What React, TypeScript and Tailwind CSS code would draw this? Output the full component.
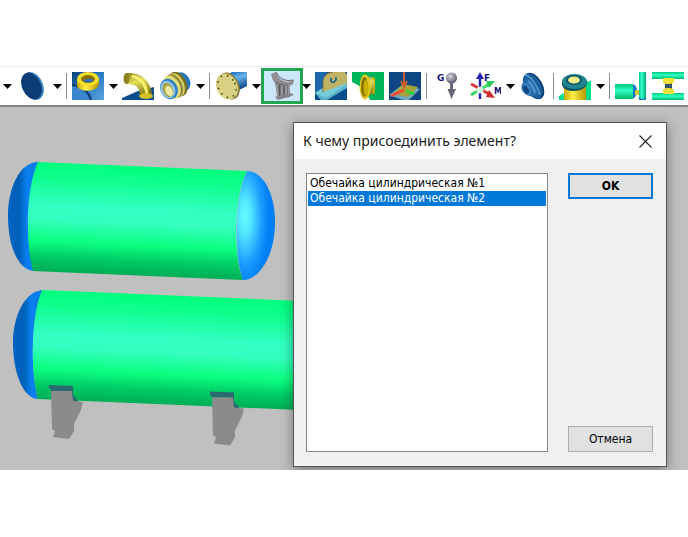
import type { ReactNode } from "react";
import { useState } from "react";
import clsx from "clsx";

const shells = ["Обечайка цилиндрическая №1", "Обечайка цилиндрическая №2"];

function Separator() {
  return <span className="h-[26px] w-[2px] shrink-0 border-l border-[#8c8c8c]" />;
}

function Arrow({ label }: { label: string }) {
  return (
    <button type="button" aria-label={label} className="h-8 w-[9px] shrink-0">
      <svg viewBox="0 0 9 5" className="h-[5px] w-[9px]">
        <path d="M0 0h9L4.5 5z" fill="#000" />
      </svg>
    </button>
  );
}

type ToolProps = {
  label: string;
  active?: boolean;
  narrow?: boolean;
  children: ReactNode;
};

function Tool({ label, active, narrow, children }: ToolProps) {
  return (
    <button
      type="button"
      aria-label={label}
      className={clsx(
        "flex shrink-0 items-center",
        active
          ? "-mr-[5px] -ml-1 h-9 w-[42px] justify-center border-3 border-[#22a652] bg-[#cce6fa]"
          : "h-8",
        !active && (narrow ? "w-[30px]" : "w-[33px]"),
      )}
    >
      <svg viewBox="0 0 32 28" className="h-7 w-8 shrink-0">
        {children}
      </svg>
    </button>
  );
}

function Gradients() {
  return (
    <svg className="absolute h-0 w-0" aria-hidden="true">
      <defs>
        <linearGradient id="sky" x1="0" y1="0" x2="0.3" y2="1">
          <stop offset="0" stopColor="#0d5ca8" />
          <stop offset="0.4" stopColor="#6bb5f0" />
          <stop offset="1" stopColor="#0b4684" />
        </linearGradient>
        <linearGradient id="plate" x1="0" y1="0" x2="1" y2="1">
          <stop offset="0" stopColor="#0b4078" />
          <stop offset="0.5" stopColor="#2f7cc4" />
          <stop offset="1" stopColor="#5aa2e0" />
        </linearGradient>
        <linearGradient id="yellow" x1="0" y1="0" x2="1" y2="0">
          <stop offset="0" stopColor="#c9a800" />
          <stop offset="0.4" stopColor="#fff04a" />
          <stop offset="1" stopColor="#b89400" />
        </linearGradient>
        <linearGradient id="olive" x1="0" y1="0" x2="0.4" y2="1">
          <stop offset="0" stopColor="#8a8420" />
          <stop offset="0.45" stopColor="#e6e05a" />
          <stop offset="1" stopColor="#7d7410" />
        </linearGradient>
        <linearGradient id="mint" x1="0" y1="0" x2="0" y2="1">
          <stop offset="0" stopColor="#00c878" />
          <stop offset="0.45" stopColor="#30ffc8" />
          <stop offset="1" stopColor="#00b868" />
        </linearGradient>
        <linearGradient id="mintSide" x1="0" y1="0" x2="1" y2="0">
          <stop offset="0" stopColor="#00c890" />
          <stop offset="0.4" stopColor="#38ffd0" />
          <stop offset="1" stopColor="#00a870" />
        </linearGradient>
        <radialGradient id="ball" cx="0.4" cy="0.35" r="0.65">
          <stop offset="0" stopColor="#d8d8e0" />
          <stop offset="1" stopColor="#5a5a6c" />
        </radialGradient>
      </defs>
    </svg>
  );
}

function Toolbar() {
  return (
    <div
      role="toolbar"
      aria-label="Элементы"
      className="flex h-[39px] items-center gap-1 overflow-hidden border-t border-[#ececec] bg-white pl-[3px]"
    >
      <Arrow label="Список обечаек" />
      <Tool label="Днище">
        <ellipse cx="17" cy="14" rx="10" ry="14.5" transform="rotate(-24 17 14)" fill="#3f86c4" />
        <ellipse cx="15.5" cy="14" rx="9.5" ry="14" transform="rotate(-24 15.5 14)" fill="#0b3c74" />
      </Tool>
      <Arrow label="Список днищ" />
      <Separator />
      <Tool label="Штуцер">
        <rect width="32" height="28" fill="url(#plate)" />
        <path d="M0 13Q16 16 19 28H0Z" fill="#3a86cc" />
        <path d="M0 13Q16 16 19 28" fill="none" stroke="#0a3868" strokeWidth="2" />
        <path d="M5 7v7c3 7 19 6 22-1V6z" fill="url(#yellow)" />
        <ellipse cx="16" cy="7" rx="11" ry="7" fill="#f6e02a" />
        <ellipse cx="16" cy="7" rx="7" ry="4" fill="#8a7400" />
        <path d="M11 9q5-4 11-1-5 5-11 1" fill="#2d73b4" />
      </Tool>
      <Arrow label="Список штуцеров" />
      <Tool label="Отвод">
        <path d="M0 28V26L16 19 32 15V28Z" fill="#0d4f8e" />
        <path d="M5 1C19 0 29 9 30 23q-4 5-12 1C18 16 15 12 4 12Z" fill="url(#olive)" />
        <ellipse cx="4.5" cy="6.5" rx="3" ry="5.5" fill="#8b8222" />
        <path d="M10 4q13 3 15 18" fill="none" stroke="#f8f06c" strokeWidth="3" />
        <ellipse cx="24" cy="24" rx="7" ry="3" fill="#cfc024" />
      </Tool>
      <Tool label="Компенсатор">
        <ellipse cx="23" cy="10" rx="8" ry="10" transform="rotate(-25 23 10)" fill="#2575b8" />
        <ellipse cx="19" cy="12" rx="8.5" ry="13" transform="rotate(-25 19 12)" fill="#77701e" />
        <ellipse cx="17" cy="13" rx="8" ry="12.5" transform="rotate(-25 17 13)" fill="#d9d06c" />
        <ellipse cx="15" cy="14" rx="8" ry="12.5" transform="rotate(-25 15 14)" fill="#8d852e" />
        <ellipse cx="13" cy="15" rx="8" ry="12" transform="rotate(-25 13 15)" fill="#e2da7c" />
        <ellipse cx="10" cy="17" rx="8.5" ry="10.5" transform="rotate(-25 10 17)" fill="#2b7dc0" />
        <ellipse cx="9" cy="17.5" rx="7" ry="9" transform="rotate(-25 9 17.5)" fill="#91c8ea" />
        <ellipse cx="9" cy="18" rx="5" ry="7.5" transform="rotate(-25 9 18)" fill="#aaa044" />
        <ellipse cx="10" cy="19" rx="3.5" ry="5.5" transform="rotate(-25 10 19)" fill="#eee9a4" />
      </Tool>
      <Arrow label="Список компенсаторов" />
      <Separator />
      <Tool label="Фланец">
        <path d="M12 3 17 0H32V14L22 19Z" fill="url(#sky)" />
        <ellipse cx="14" cy="14" rx="10" ry="14" transform="rotate(-25 14 14)" fill="#857d36" />
        <ellipse cx="12" cy="14.5" rx="10.5" ry="13.5" transform="rotate(-25 12 14.5)" fill="#d8d184" />
        <ellipse
          cx="12"
          cy="14.5"
          rx="8.5"
          ry="11.5"
          transform="rotate(-25 12 14.5)"
          fill="none"
          stroke="#4b4514"
          strokeWidth="1.7"
          strokeDasharray="1.5 5"
        />
      </Tool>
      <Arrow label="Список фланцев" />
      <Tool label="Седловая опора" active>
        <path d="M5 2 10 0C13 9 20 12 28 8l-1 4Q24 15 19 14L9 11Q6 8 5 2" fill="#8f8f93" />
        <path d="M9 10 23 13 24 25 12 27Z" fill="#77777b" />
        <path d="M11 12l1 14M16 14v11M20 14v10M23 13v11" stroke="#97979b" strokeWidth="2" />
        <path d="M13.500 13v13M18 14v11" stroke="#56565a" />
        <path d="M9 25 25 21 28 23 12 28Z" fill="#85858a" />
        <path d="M10 0q5 11 18 8" fill="none" stroke="#65656a" />
      </Tool>
      <Arrow label="Список опор" />
      <Tool label="Проушина">
        <rect width="32" height="28" fill="#0c4c8a" />
        <path d="M0 0H12L7 10V17L0 21Z" fill="#1b67ac" />
        <path d="M0 21 9 15 32 10V16L12 28H6Z" fill="#58b3c8" />
        <path d="M0 21 10 15 31 10V13L11 26Z" fill="#76cbd8" />
        <path d="M8 20V9Q9 1 18 0H30L32 3V11Z" fill="#c0b264" />
        <path d="M8 20V9Q9 1 18 0" fill="none" stroke="#81743a" />
        <path d="M16 6v3q2 3 5-1V5" fill="none" stroke="#176387" strokeWidth="1.7" />
      </Tool>
      <Tool label="Врезка">
        <path d="M0 0H32V28H18Q14 16 0 10Z" fill="#00b45a" />
        <path d="M13 4 23 6V21L13 25Z" fill="url(#olive)" />
        <path d="M20 6q5 6 0 16l3-1V6z" fill="#c9b300" />
        <ellipse cx="13" cy="15" rx="5.5" ry="12.5" fill="#e1ca24" />
        <ellipse cx="12.5" cy="15" rx="3.5" ry="10" fill="#857300" />
        <ellipse cx="14" cy="16" rx="2.5" ry="8" fill="#c6ad00" />
      </Tool>
      <Tool label="Опорная лапа">
        <rect width="32" height="28" fill="#0d4682" />
        <path d="M0 23 13 13 31 17 20 28H14Z" fill="#73a9ba" />
        <path d="M4 22 14 12 29 15 19 25Z" fill="#a9a238" />
        <path d="M2 24 15 18" stroke="#ef4939" strokeWidth="3" />
        <path d="M17 19 25 22" stroke="#29d43a" strokeWidth="2.5" />
        <path d="M15 0V13M12 9 15 15 18 9" fill="none" stroke="#c75e32" strokeWidth="2" />
      </Tool>
      <Separator />
      <Tool label="Масса">
        <text x="5" y="9" fill="#11117a" className="font-['DejaVu_Sans'] text-[9px] font-bold">
          G
        </text>
        <path d="M18 8h3v9h3l-4.500 10-4-10H18z" fill="#666676" />
        <circle cx="19.5" cy="6" r="5.5" fill="url(#ball)" />
      </Tool>
      <Tool label="Нагрузки">
        <path d="M11 27V3" stroke="#2424b8" strokeWidth="2.5" />
        <path d="M7 7 11 0 15 7Z" fill="#2424b8" />
        <path d="M2 12 22 23" stroke="#d83838" strokeWidth="3" />
        <path d="M20 18 26 26 17 25Z" fill="#d02b2b" />
        <path d="M2 23 22 11" stroke="#3bd663" strokeWidth="3" />
        <path d="M17 9 26 9 20 16Z" fill="#31c957" />
        <circle cx="11" cy="18" r="3.5" fill="#d2f5dc" />
        <text x="15" y="9" fill="#11117a" className="font-['DejaVu_Sans'] text-[9px] font-bold">
          F
        </text>
        <text x="25" y="22" fill="#11117a" className="font-['DejaVu_Sans'] text-[8px] font-bold">
          M
        </text>
      </Tool>
      <Arrow label="Список нагрузок" />
      <Tool label="Переход" narrow>
        <ellipse cx="15" cy="14" rx="8.500" ry="14.500" transform="rotate(-30 15 14)" fill="#0a3f74" />
        <ellipse cx="13.500" cy="14" rx="8" ry="13.500" transform="rotate(-30 13.500 14)" fill="#1b5f9c" />
        <path d="M6 3Q15 5 21 23" fill="none" stroke="#5b9dcc" strokeWidth="1.500" />
        <path d="M9 6 3 12Q1 17 5 21T13 24L19 23Q18 12 9 6Z" fill="#226cae" />
        <path d="M9 9Q14 13 16 21" fill="none" stroke="#4f94cc" strokeWidth="2.500" />
        <ellipse cx="7.500" cy="17" rx="4" ry="6.500" transform="rotate(-30 7.500 17)" fill="#3a84c0" />
        <ellipse cx="7" cy="17.500" rx="2.500" ry="4.500" transform="rotate(-30 7 17.500)" fill="#12477c" />
      </Tool>
      <Separator />
      <Tool label="Люк">
        <path d="M0 28V24Q5 20 12 20L24 10 32 9V28Z" fill="#00e08c" />
        <path d="M5 12H27V28H5Z" fill="url(#yellow)" />
        <path d="M3 10V13Q5 19 15 19T28 12V9Z" fill="#07545e" />
        <ellipse cx="15.5" cy="9.5" rx="12.500" ry="7.500" fill="#248391" />
        <ellipse cx="15" cy="8" rx="8" ry="5" fill="#0b5661" />
        <ellipse cx="15" cy="8" rx="6" ry="3.500" fill="#eded8c" />
      </Tool>
      <Arrow label="Список люков" />
      <Separator />
      <Tool label="Рубашка">
        <path d="M16 12Q22 12 22 19T16 27Z" fill="#1676c8" />
        <rect y="12" width="18" height="15" fill="url(#mint)" />
        <rect x="20" y="18" width="5" height="5" fill="#d6c63c" />
        <path d="M24 0H31V27Q27 30 24 27Z" fill="url(#mintSide)" />
        <path d="M24 26q3 4 7 0" fill="none" stroke="#1769bb" strokeWidth="1.5" />
      </Tool>
      <Tool label="Соединение">
        <rect width="32" height="7" fill="url(#mint)" />
        <rect y="21" width="32" height="7" fill="url(#mint)" />
        <path d="M13 6H20V21H13Z" fill="url(#yellow)" />
        <path d="M11 6H22V11H11ZM11 17H22V22H11Z" fill="#eee336" />
        <rect x="13" y="12" width="7" height="4" fill="#34546a" />
      </Tool>
    </div>
  );
}

function Model() {
  return (
    <svg viewBox="0 107 300 363" className="absolute top-0 left-0 h-[363px] w-[300px]">
      <defs>
        <linearGradient id="shell1" gradientUnits="userSpaceOnUse" x1="140" y1="167" x2="135" y2="275">
          <stop offset="0" stopColor="#00ff7c" />
          <stop offset="0.15" stopColor="#10ff90" />
          <stop offset="0.4" stopColor="#34ffc4" />
          <stop offset="0.52" stopColor="#34ffc0" />
          <stop offset="0.72" stopColor="#0cff80" />
          <stop offset="0.88" stopColor="#00c964" />
          <stop offset="1" stopColor="#00ae56" />
        </linearGradient>
        <linearGradient id="shell2" href="#shell1" gradientTransform="translate(3 128)" />
        <linearGradient id="dome" x1="0" y1="0" x2="1" y2="0">
          <stop offset="0" stopColor="#0064c4" />
          <stop offset="0.35" stopColor="#0060b8" />
          <stop offset="0.6" stopColor="#0a80f0" />
          <stop offset="1" stopColor="#0a78e0" />
        </linearGradient>
        <radialGradient id="cap" cx="0.22" cy="0.42" r="0.62">
          <stop offset="0" stopColor="#62ffff" />
          <stop offset="0.25" stopColor="#54e8ff" />
          <stop offset="0.7" stopColor="#1c9cff" />
          <stop offset="1" stopColor="#0080f4" />
        </radialGradient>
      </defs>

      <path d="M40 162C20 160 8 188 8 216C8 246 18 270 34 271C25 240 27 190 40 162Z" fill="url(#dome)" />
      <path d="M38 162 247 171C234 195 233 256 243 280L33 271C25 240 26 188 38 162Z" fill="url(#shell1)" />
      <path d="M247 171C262 171 275 192 275 222C275 256 259 280 243 280C234 256 234 196 247 171Z" fill="url(#cap)" />

      <path d="M44 290C25 290 13 316 13 343C13 374 24 399 38 399C30 368 31 318 44 290Z" fill="url(#dome)" />
      <path d="M42 290 300 301V410L38 399C30 368 31 316 42 290Z" fill="url(#shell2)" />

      <g id="saddle">
        <path d="M49 385 73 386V395L78 401V403H72L69 391H51V389H49Z" fill="#2b6870" />
        <path d="M51 391H72L73 401 83 402 81 410 74 424V431L69 439 53 437 55 431 52 429Z" fill="#8b8b8b" />
      </g>
      <use href="#saddle" transform="translate(161 6.5)" />
    </svg>
  );
}

function AttachDialog() {
  const [selected, setSelected] = useState(shells[1]);

  return (
    <div
      role="dialog"
      aria-labelledby="dialog-title"
      className="relative w-[374px] border border-[#555] bg-[#f0f0f0] text-xs text-black shadow-[0_3px_12px_rgba(0,0,0,0.4)]"
    >
      <div className="flex h-9 items-center justify-between bg-white pr-[14px] pl-[9px]">
        <h1 id="dialog-title" className="font-['Noto_Sans',sans-serif] text-sm text-[#222]">
          К чему присоединить элемент?
        </h1>
        <button type="button" aria-label="Закрыть">
          <svg viewBox="0 0 13 13" className="size-[13px]">
            <path d="M.5.5l12 12M12.5.5l-12 12" stroke="#222" strokeWidth="1.1" />
          </svg>
        </button>
      </div>
      <div className="flex justify-between pt-[14px] pr-[13px] pb-[14px] pl-3">
        <select
          size={2}
          aria-label="Элемент"
          value={selected}
          onChange={(e) => setSelected(e.target.value)}
          className="h-[279px] w-[242px] overflow-hidden border border-[#828790] bg-white p-px pt-[2px] outline-none"
        >
          {shells.map((shell) => (
            <option
              key={shell}
              value={shell}
              className="h-[15px] min-h-0 px-[2px] py-0 leading-[15px] checked:bg-[linear-gradient(#0078d7,#0078d7)] checked:[-webkit-text-fill-color:white]"
            >
              {shell}
            </option>
          ))}
        </select>
        <div className="flex w-[85px] flex-col justify-between">
          <button type="button" className="h-[26px] border-2 border-[#0078d7] bg-[#e1e1e1] font-bold">
            OK
          </button>
          <button type="button" className="h-[26px] border border-[#adadad] bg-[#e1e1e1]">
            Отмена
          </button>
        </div>
      </div>
    </div>
  );
}

export default function App() {
  return (
    <main className="min-h-screen bg-white pt-[66px] font-['DejaVu_Sans_Condensed','DejaVu_Sans',sans-serif]">
      <Gradients />
      <Toolbar />
      <div className="border-t-2 border-[#858585]">
        <div className="relative overflow-hidden bg-[#c0c0c0] pt-[15px] pb-[3px] pl-[293px]">
          <Model />
          <AttachDialog />
        </div>
      </div>
    </main>
  );
}
